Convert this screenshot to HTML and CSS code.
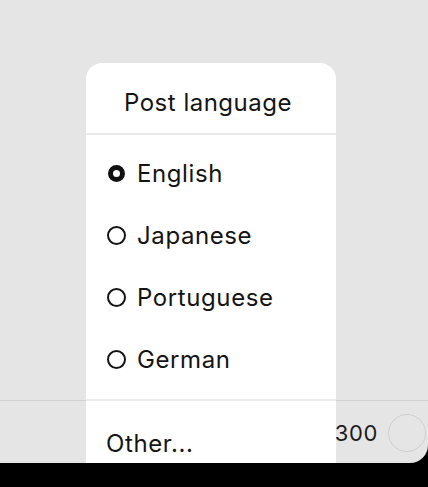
FILE: index.html
```html
<!DOCTYPE html>
<html lang="en">
<head>
<meta charset="utf-8">
<title>Post language</title>
<link rel="stylesheet" href="styles.css">
</head>
<body>
<div class="screen">
  <div class="content"></div>
  <div class="toolbar">
    <span class="count">300</span>
    <span class="progress"></span>
  </div>
  <div class="menu" role="menu">
    <div class="menu-title">Post language</div>
    <div class="menu-section">
      <div class="menu-item"><span class="radio radio-on"></span><span class="label">English</span></div>
      <div class="menu-item"><span class="radio"></span><span class="label">Japanese</span></div>
      <div class="menu-item"><span class="radio"></span><span class="label">Portuguese</span></div>
      <div class="menu-item"><span class="radio"></span><span class="label">German</span></div>
    </div>
    <div class="menu-section menu-section-other">
      <div class="menu-item menu-item-plain"><span class="label">Other...</span></div>
    </div>
  </div>
</div>
<div class="home-bar"></div>
</body>
</html>
```

FILE: styles.css
```css
html, body {
  margin: 0;
  padding: 0;
}
body {
  width: 428px;
  height: 487px;
  overflow: hidden;
  background: #000;
  font-family: Inter, "Noto Sans", "Liberation Sans", sans-serif;
  color: #141414;
}
.screen {
  position: relative;
  height: 463px;
  background: #e5e5e5;
  border-bottom-right-radius: 18px;
  overflow: hidden;
  display: flex;
  flex-direction: column;
}
.content {
  flex: 1;
}
.toolbar {
  height: 60px;
  border-top: 1px solid #d2d2d2;
  display: flex;
  justify-content: flex-end;
  align-items: center;
  padding-right: 2px;
  padding-top: 2px;
}
.count {
  font-size: 22px;
  letter-spacing: 0.6px;
  color: #1c1c1c;
}
.progress {
  width: 36px;
  height: 36px;
  border: 1px solid #cfcfcf;
  border-radius: 50%;
  margin-left: 10px;
}
.menu {
  position: absolute;
  left: 86px;
  top: 63px;
  width: 250px;
  height: 460px;
  background: #fff;
  border-radius: 16px;
}
.menu-title {
  font-size: 24px;
  line-height: 29px;
  text-align: center;
  padding: 25px 6px 16px 0;
  border-bottom: 2px solid #ebebeb;
  letter-spacing: 0.5px;
}
.menu-section {
  padding: 7px 0 9px;
}
.menu-section-other {
  border-top: 2px solid #ebebeb;
  padding-top: 11px;
}
.menu-item {
  height: 62px;
  display: flex;
  align-items: center;
  padding-left: 21px;
  gap: 11px;
}
.menu-item-plain {
  padding-left: 20px;
}
.label {
  font-size: 24px;
  line-height: 29px;
  letter-spacing: 0.6px;
}
.radio {
  width: 19px;
  height: 19px;
  box-sizing: border-box;
  border: 2px solid #141414;
  border-radius: 50%;
  flex: none;
}
.radio-on {
  border: 5.5px solid #111;
  width: 17px;
  height: 17px;
  margin: 0 1px;
}
.home-bar {
  height: 24px;
}
```
